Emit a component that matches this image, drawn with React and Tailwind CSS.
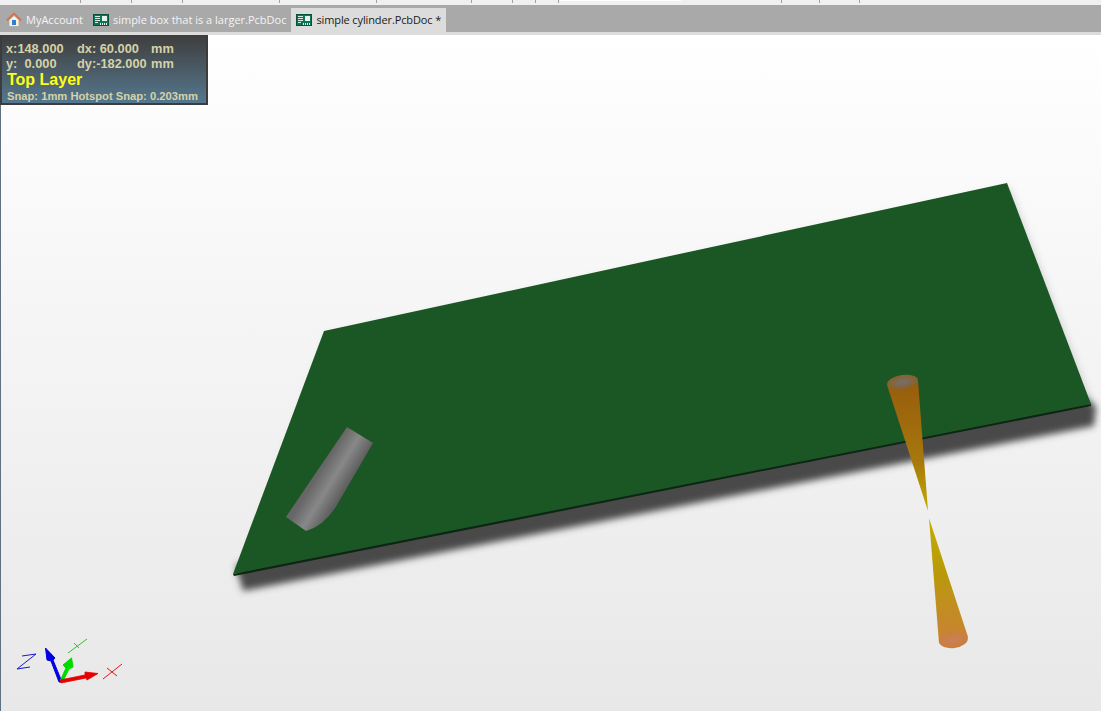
import React from 'react';

const rulerTicks = [80, 131, 182, 279, 376, 471, 512, 535, 558, 781, 819, 859];

const HomeIcon = () => (
  <svg width="16" height="16" viewBox="0 0 16 16" className="shrink-0">
    <path d="M3 8v6.500h10V8L8 3.500z" fill="#f4f1e6" stroke="#a9a28c" strokeWidth="0.7" />
    <path d="M0.800 8.500 8 1.600l7.200 6.900" fill="none" stroke="#d4724c" strokeWidth="1.800" />
    <rect x="6" y="8" width="4" height="5" fill="#2f7fd6" />
  </svg>
);

const BoardIcon = () => (
  <svg width="16" height="12" viewBox="0 0 16 12" className="shrink-0">
    <rect x="0" y="0" width="16" height="12" fill="#07513f" />
    <rect x="1" y="1" width="14" height="10" fill="#0c7558" />
    <path d="M2 2.500h5M2 4.500h5M2 6.500h5M2 8.500h3" stroke="#d8eee4" strokeWidth="1" />
    <rect x="9" y="2" width="5" height="5" fill="#e6f2ec" />
    <path d="M7 10h7" stroke="#e6f2ec" strokeWidth="2" strokeDasharray="1 1" />
  </svg>
);

const Tab = ({ icon, label, active }) => (
  <div className={`flex items-center gap-[4px] pl-[5px] pr-[5px] h-[24px] ${active ? 'bg-[#dcdcdc] text-[#1a1a1a] tracking-[-0.12px]' : 'text-[#f4f4f4]'}`}>
    {icon}
    <span className="whitespace-nowrap">{label}</span>
  </div>
);

// the 3d view is one drawing: board, shadow, both bodies and the axis triad
const Scene = () => (
  <svg viewBox="0 0 1101 676" className="absolute left-[-1px] top-0 w-[1101px] h-[676px]">
    <defs>
      <linearGradient id="cone" gradientUnits="userSpaceOnUse" x1="0" y1="346" x2="0" y2="612">
        <stop offset="0" stopColor="#975c0c" />
        <stop offset="0.3" stopColor="#a6780c" />
        <stop offset="0.5" stopColor="#c4ae00" />
        <stop offset="0.72" stopColor="#b89a0a" />
        <stop offset="1" stopColor="#cc7f3a" />
      </linearGradient>
      <linearGradient id="tube" gradientUnits="userSpaceOnUse" x1="347" y1="392" x2="373" y2="408">
        <stop offset="0" stopColor="#666666" />
        <stop offset="0.5" stopColor="#888888" />
        <stop offset="1" stopColor="#606060" />
      </linearGradient>
      <radialGradient id="capTop">
        <stop offset="0" stopColor="#756f70" />
        <stop offset="1" stopColor="#87622a" />
      </radialGradient>
      <radialGradient id="capBottom">
        <stop offset="0" stopColor="#c9805a" />
        <stop offset="1" stopColor="#c97f3c" />
      </radialGradient>
      <filter id="soft" x="-5%" y="-20%" width="110%" height="140%">
        <feGaussianBlur stdDeviation="3.500" />
      </filter>
    </defs>

    <path d="M327 300 1010 152 1094 373 236 543Z" fill="#888888" opacity="0.3" filter="url(#soft)" />
    <path d="M236 530 1085 362 1096 372 1094 391 243 556Z" fill="#4a494a" filter="url(#soft)" />
    <path d="M324 296 1007 148 1091 369 233 539Z" fill="#1b5725" />
    <path d="M233 539 1091 369 1091 371 234 541Z" fill="#0b2712" />

    <path d="M347 392 373 408 338 468Q326 490 306 496L286 482Z" fill="url(#tube)" />

    <path d="M887 350 918 346 928 476Z" fill="url(#cone)" />
    <path d="M929 483 968 602Q953 616 939 608Z" fill="url(#cone)" />
    <ellipse cx="902.500" cy="347" rx="15.500" ry="7" transform="rotate(-9 902.500 347)" fill="url(#capTop)" />
    <ellipse cx="953.500" cy="605" rx="14.500" ry="8" transform="rotate(-8 953.500 605)" fill="url(#capBottom)" />

    {/* axis triad, written in page coordinates */}
    <g transform="translate(0 -35)">
      <path d="M45.500 648 55 658 53 660 62 682 59 682 51 661 47 660Z" fill="#0000e6" stroke="#0000e6" strokeWidth="1" />
      <path d="M71.500 658 73 667 69 669 63 681 60.500 680 66 668 63 665Z" fill="#00d900" stroke="#00d900" strokeWidth="1" />
      <path d="M60 680 85 675 85 672 98 673.500 87 680 86 678 61 683Z" fill="#e60000" stroke="#e60000" strokeWidth="0.8" />
      <path d="M22 656 36 654 17 669 30 667" fill="none" stroke="#1818d0" strokeWidth="1" />
      <path d="M68 653 87 639M74 643l5 5" fill="none" stroke="#22cc22" strokeWidth="1" />
      <path d="M103 679 122 664M107 668l10 8" fill="none" stroke="#e01818" strokeWidth="1" />
    </g>
  </svg>
);

const App = () => (
  <div className="w-[1101px] h-[711px] overflow-hidden flex flex-col bg-white font-['Liberation_Sans',sans-serif]">
    {/* ruler strip */}
    <div className="relative h-[5px] bg-[#f0f0f0] flex shrink-0">
      {rulerTicks.map((x, i) => (
        <div key={i} className="w-px h-[3px] bg-[#a0a0a0]" style={{ marginLeft: i === 0 ? x : x - rulerTicks[i - 1] - 1 }} />
      ))}
      <div className="absolute left-[560px] top-0 w-[121px] h-px bg-white" />
    </div>

    {/* document tabs */}
    <div className="h-[30px] shrink-0 bg-[#a9a9a9] flex flex-col justify-end">
      <div className="flex items-end pl-[1px] text-[11px] font-['Open_Sans',sans-serif] h-[24px]">
        <Tab icon={<HomeIcon />} label="MyAccount" />
        <Tab icon={<BoardIcon />} label="simple box that is a larger.PcbDoc" />
        <Tab icon={<BoardIcon />} label="simple cylinder.PcbDoc *" active />
      </div>
      <div className="h-[3px] bg-[#dcdcdc]" />
    </div>

    {/* 3d view */}
    <div className="relative flex-1 border-l border-[#5f7080] bg-gradient-to-b from-white to-[#e8e8e8]">
      <Scene />
      <div className="absolute left-[-1px] top-0 w-[208px] h-[70px] bg-gradient-to-b from-[#3e3e3e] to-[#54788f] border-2 border-t-0 border-[#3c3c3c] pl-[4px] font-bold text-[#d6d2a6] text-[12.800px] leading-[15px]">
        <div className="flex pt-[6px]">
          <span className="w-[71px]">x:148.000</span>
          <span className="w-[74px]">dx: 60.000</span>
          <span>mm</span>
        </div>
        <div className="flex">
          <span className="w-[71px] whitespace-pre">y:  0.000</span>
          <span className="w-[74px]">dy:-182.000</span>
          <span>mm</span>
        </div>
        <div className="text-[#ffff14] text-[16px] leading-[18px] pl-[1px]">Top Layer</div>
        <div className="text-[11.200px] leading-[14px] pl-[1px]">Snap: 1mm Hotspot Snap: 0.203mm</div>
      </div>
    </div>
  </div>
);

export default App;
